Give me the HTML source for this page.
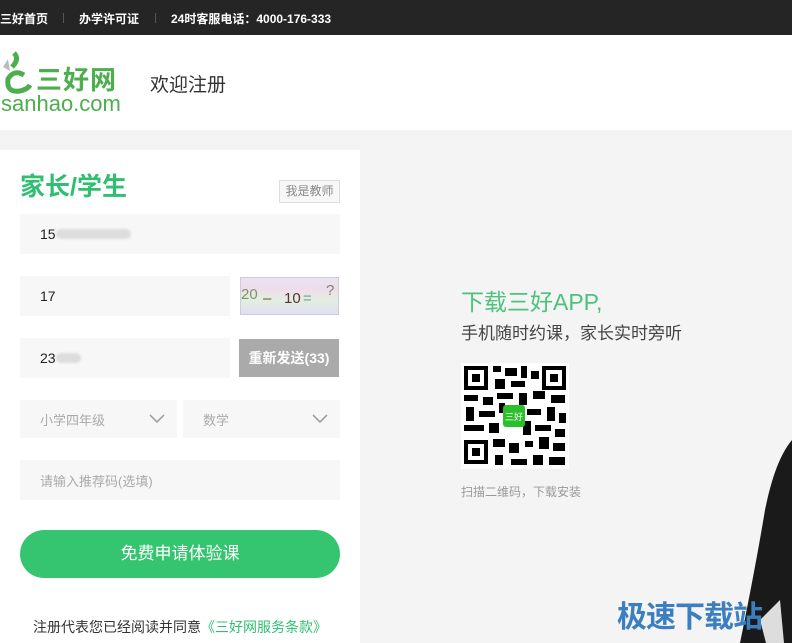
<!DOCTYPE html>
<html><head><meta charset="utf-8"><style>
*{margin:0;padding:0;box-sizing:border-box}
body{width:792px;height:643px;overflow:hidden;background:#f4f4f4;font-family:"Liberation Sans","Noto Sans CJK SC",sans-serif;position:relative}
.top{position:absolute;left:0;top:0;width:792px;height:35px;background:#252525;color:#fff;font-size:12px;font-weight:bold}
.top span{position:absolute;top:10px}
.sep{position:absolute;top:13px;width:1px;height:10px;background:#555}
.hdr{position:absolute;left:0;top:35px;width:792px;height:95px;background:#fff}
.panel{position:absolute;left:0;top:150px;width:360px;height:493px;background:#fff}
.in{position:absolute;background:#f7f7f7;font-size:14px;color:#222;padding-left:20px;display:flex;align-items:center}
.ph{color:#aaa;font-size:13px}
.blur{display:inline-block;background:#ddd;border-radius:5px;height:10px;filter:blur(1px)}
</style></head><body>
<div class="top">
<span style="left:0">三好首页</span><div class="sep" style="left:63px"></div>
<span style="left:79px">办学许可证</span><div class="sep" style="left:155px"></div>
<span style="left:171px">24时客服电话：4000-176-333</span>
</div>
<div class="hdr">
<svg style="position:absolute;left:0;top:14px" width="40" height="50" viewBox="0 0 40 50"><path d="M3 18 L8 10 L10 22Z" fill="#bbb"/><path d="M14 4 Q20 10 12 18" stroke="#4cae4c" stroke-width="5" fill="none"/><path d="M24 26 Q14 20 8 30 Q6 44 20 42 Q28 40 30 36" stroke="#4cae4c" stroke-width="5" fill="none"/></svg>
<div style="position:absolute;left:36px;top:25px;font-size:26px;color:#4cae4c;font-weight:bold;letter-spacing:1px">三好网</div>
<div style="position:absolute;left:1px;top:56px;font-size:22px;color:#4cae4c">sanhao.com</div>
<div style="position:absolute;left:150px;top:35px;font-size:19px;color:#333">欢迎注册</div>
</div>
<div class="panel">
<div style="position:absolute;left:20px;top:17px;font-size:25px;color:#2fbf70;font-weight:bold">家长/学生</div>
<div style="position:absolute;left:279px;top:30px;width:61px;height:23px;border:1px solid #ddd;background:#f7f7f7;color:#888;font-size:12px;text-align:center;line-height:21px">我是教师</div>
<div class="in" style="left:20px;top:64px;width:320px;height:40px">15<span class="blur" style="width:75px"></span></div>
<div class="in" style="left:20px;top:126px;width:210px;height:40px">17</div>
<div style="position:absolute;left:240px;top:127px;width:99px;height:38px;border:1px solid #ccd;background:linear-gradient(#e8e4f0,#f0dcec 30%,#e4eee0 60%,#e0e0f0);font-size:15px;color:#553">
<span style="position:absolute;left:0;top:8px;color:#796">20</span><span style="position:absolute;left:22px;top:12px">–</span><span style="position:absolute;left:43px;top:12px;color:#533">10</span><span style="position:absolute;left:62px;top:12px;color:#6a8">=</span><span style="position:absolute;left:85px;top:4px;color:#786">?</span></div>
<div class="in" style="left:20px;top:188px;width:210px;height:40px">23<span class="blur" style="width:25px"></span></div>
<div style="position:absolute;left:239px;top:189px;width:100px;height:38px;background:#aaa;color:#fff;font-size:14px;font-weight:bold;text-align:center;line-height:38px">重新发送(33)</div>
<div class="in ph" style="left:20px;top:250px;width:157px;height:38px">小学四年级<svg style="position:absolute;right:12px;top:14px" width="16" height="10"><path d="M1 1 L8 8 L15 1" stroke="#999" fill="none" stroke-width="1.5"/></svg></div>
<div class="in ph" style="left:183px;top:250px;width:157px;height:38px">数学<svg style="position:absolute;right:12px;top:14px" width="16" height="10"><path d="M1 1 L8 8 L15 1" stroke="#999" fill="none" stroke-width="1.5"/></svg></div>
<div class="in ph" style="left:20px;top:310px;width:320px;height:40px">请输入推荐码(选填)</div>
<div style="position:absolute;left:20px;top:380px;width:320px;height:48px;border-radius:24px;background:#35c46f;color:#fff;font-size:17px;text-align:center;line-height:48px">免费申请体验课</div>
<div style="position:absolute;left:33px;top:467px;font-size:14px;color:#333">注册代表您已经阅读并同意<span style="color:#2fbf70">《三好网服务条款》</span></div>
</div>
<div style="position:absolute;left:461px;top:283px;font-size:23px;color:#4cc27c">下载三好APP,</div>
<div style="position:absolute;left:461px;top:319px;font-size:17px;color:#444">手机随时约课，家长实时旁听</div>
<svg style="position:absolute;left:461px;top:363px" width="108" height="106" viewBox="0 0 108 106">
<rect width="108" height="106" fill="#fff"/>
<g fill="#000">
<rect x="3" y="3" width="24" height="24"/><rect x="81" y="3" width="24" height="24"/><rect x="3" y="77" width="24" height="24"/>
</g><g fill="#fff"><rect x="7" y="7" width="16" height="16"/><rect x="85" y="7" width="16" height="16"/><rect x="7" y="81" width="16" height="16"/></g>
<g fill="#000"><rect x="11" y="11" width="8" height="8"/><rect x="89" y="11" width="8" height="8"/><rect x="11" y="85" width="8" height="8"/>
<rect x="32" y="3" width="8" height="6"/><rect x="44" y="5" width="12" height="8"/><rect x="60" y="3" width="6" height="12"/><rect x="70" y="8" width="8" height="8"/>
<rect x="34" y="16" width="10" height="10"/><rect x="50" y="18" width="14" height="6"/><rect x="3" y="32" width="14" height="6"/><rect x="22" y="34" width="10" height="8"/>
<rect x="36" y="30" width="16" height="6"/><rect x="58" y="30" width="8" height="12"/><rect x="72" y="28" width="12" height="8"/><rect x="90" y="32" width="14" height="8"/>
<rect x="5" y="44" width="8" height="14"/><rect x="18" y="48" width="16" height="6"/><rect x="38" y="40" width="6" height="10"/><rect x="66" y="46" width="14" height="6"/><rect x="86" y="44" width="8" height="14"/><rect x="98" y="50" width="7" height="10"/>
<rect x="3" y="62" width="20" height="6"/><rect x="28" y="60" width="10" height="10"/><rect x="62" y="58" width="8" height="14"/><rect x="74" y="62" width="16" height="6"/><rect x="94" y="66" width="10" height="8"/>
<rect x="32" y="76" width="12" height="8"/><rect x="48" y="80" width="10" height="10"/><rect x="64" y="78" width="8" height="6"/><rect x="78" y="74" width="10" height="12"/><rect x="92" y="80" width="12" height="8"/>
<rect x="34" y="92" width="8" height="10"/><rect x="50" y="96" width="16" height="6"/><rect x="72" y="92" width="10" height="10"/><rect x="88" y="94" width="16" height="8"/></g>
<rect x="42" y="42" width="22" height="22" rx="3" fill="#2bc02b"/><text x="53" y="57" font-size="9" fill="#fff" text-anchor="middle" font-family="Noto Sans CJK SC">三好</text>
</svg>
<div style="position:absolute;left:461px;top:483px;font-size:12px;color:#999">扫描二维码，下载安装</div>
<svg style="position:absolute;left:680px;top:420px" width="112" height="223"><path d="M112 20 Q95 40 85 90 Q75 150 60 223 L112 223Z" fill="#1a1a1a"/><path d="M80 200 L100 180 L104 223 L86 223Z" fill="#ddd"/></svg>
<div style="position:absolute;left:617px;top:592px;font-size:30px;font-weight:bold;color:#3c7fc0;letter-spacing:-1px">极速下载站</div>
</body></html>
